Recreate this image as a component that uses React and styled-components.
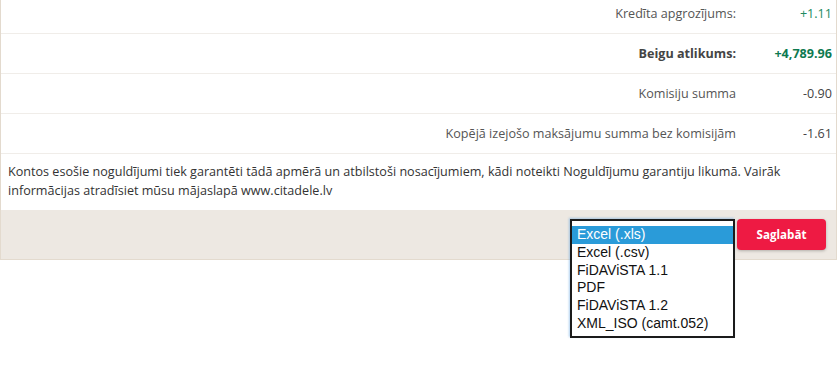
import React from 'react'
import styled, { createGlobalStyle } from 'styled-components'

const GlobalStyle = createGlobalStyle`
    html, body {
        margin: 0;
        padding: 0;
        background: #ffffff;
        font-family: "Open Sans", "Liberation Sans", sans-serif;
    }
`

const Page = styled.div`
    width: 840px;
    height: 370px;
    overflow: hidden;
`
const Panel = styled.div`
    width: 835px;
    margin-top: -6px;
    border-left: 1px solid #e3dace;
    border-right: 1px solid #e3dace;
    border-bottom: 1px solid #e3dace;
`
const Row = styled.div`
    display: grid;
    grid-template-columns: 1fr 90px;
    box-sizing: border-box;
    height: 40px;
    align-items: center;
    border-bottom: 1px solid #f0ede9;
    font-size: 12.6px;
    color: #555555;
`
const Label = styled.div`
    text-align: right;
    padding-right: 10px;
    font-weight: ${props => (props.$bold ? 700 : 400)};
    color: ${props => (props.$bold ? '#444444' : '#555555')};
`
const Value = styled.div`
    text-align: right;
    padding-right: 4px;
    font-weight: ${props => (props.$bold ? 700 : 400)};
    color: ${props => props.$color || '#444444'};
`
const Note = styled.p`
    margin: 0;
    padding: 8px 7px 10px 7px;
    font-size: 12.6px;
    line-height: 19px;
    color: #333333;
`
const Footer = styled.div`
    display: flex;
    justify-content: flex-end;
    align-items: center;
    gap: 2px;
    padding: 9px 10px 9px 0;
    background: #ede8e2;
`
const SelectWrap = styled.div`
    position: relative;
    width: 165px;
    height: 31px;
`
const Dropdown = styled.ul`
    position: absolute;
    top: 0;
    left: 0;
    width: 165px;
    margin: 0;
    padding: 5px 0 3px;
    box-sizing: border-box;
    list-style: none;
    background: #ffffff;
    border: 2px solid #1b1b1b;
    box-shadow: -1px -1px 2px rgba(80, 150, 220, 0.45);
    font-family: "Liberation Sans", Arial, sans-serif;
    font-size: 14px;
    color: #111111;
    z-index: 10;
`
const OptionItem = styled.li`
    height: 17.8px;
    line-height: 17.8px;
    padding-left: 5px;
    white-space: nowrap;
    background: ${props => (props.$active ? '#2a9bd9' : 'transparent')};
    color: ${props => (props.$active ? '#ffffff' : '#111111')};
`
const SaveButton = styled.button`
    height: 31px;
    width: 89px;
    border: none;
    border-radius: 4px;
    background: #ee1a43;
    color: #ffffff;
    font-family: "Open Sans", sans-serif;
    font-weight: 700;
    font-size: 11.6px;
    box-shadow: 0 1px 3px rgba(0, 0, 0, 0.25);
    cursor: pointer;
`

const rows = [
    { label: 'Kredīta apgrozījums:', value: '+1.11', color: '#218a60' },
    { label: 'Beigu atlikums:', value: '+4,789.96', color: '#0e7a50', bold: true },
    { label: 'Komisiju summa', value: '-0.90' },
    { label: 'Kopējā izejošo maksājumu summa bez komisijām', value: '-1.61' }
]

const formats = ['Excel (.xls)', 'Excel (.csv)', 'FiDAViSTA 1.1', 'PDF', 'FiDAViSTA 1.2', 'XML_ISO (camt.052)']

export default function App() {
    return (
        <Page>
            <GlobalStyle />
            <Panel>
                {rows.map(r => (
                    <Row key={r.label}>
                        <Label $bold={r.bold}>{r.label}</Label>
                        <Value $bold={r.bold} $color={r.color}>{r.value}</Value>
                    </Row>
                ))}
                <Note>
                    Kontos esošie noguldījumi tiek garantēti tādā apmērā un atbilstoši nosacījumiem, kādi noteikti Noguldījumu garantiju likumā. Vairāk informācijas atradīsiet mūsu mājaslapā www.citadele.lv
                </Note>
                <Footer>
                    <SelectWrap>
                        <Dropdown>
                            {formats.map((f, i) => (
                                <OptionItem key={f} $active={i === 0}>{f}</OptionItem>
                            ))}
                        </Dropdown>
                    </SelectWrap>
                    <SaveButton>Saglabāt</SaveButton>
                </Footer>
            </Panel>
        </Page>
    )
}
